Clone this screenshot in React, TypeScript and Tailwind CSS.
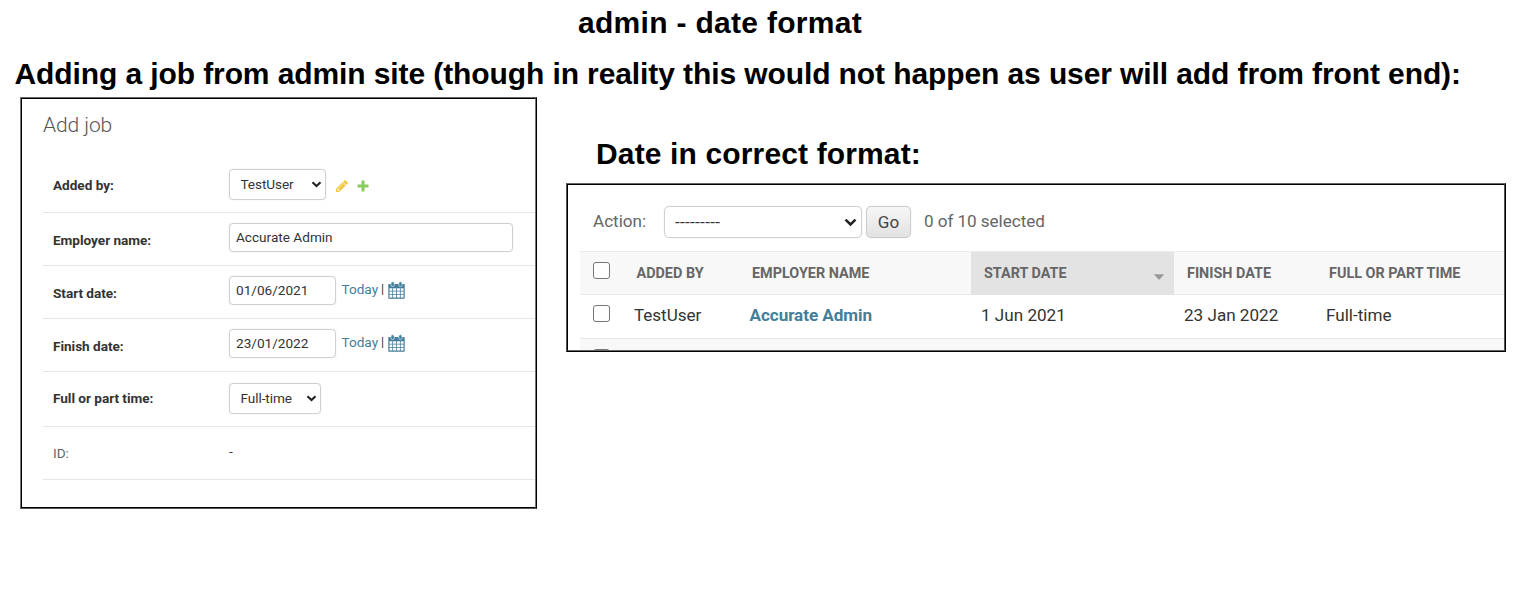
import type { ReactNode } from 'react';

function Chevron({ className }: { className?: string }) {
  return (
    <svg className={className} viewBox="0 0 12 8" fill="none" stroke="#222" strokeWidth="2.4">
      <path d="M1.4 1.4 6 5.8l4.600-4.400" />
    </svg>
  );
}

function Pencil() {
  return (
    <svg className="h-[14px] w-[14px]" viewBox="0 0 1792 1792" fill="#efb80b" fillOpacity="0.75">
      <path d="M491 1536l91-91-235-235-91 91v107h128v128h107zm523-928q0-22-22-22-10 0-17 7l-542 542q-7 7-7 17 0 22 22 22 10 0 17-7l542-542q7-7 7-17zm-54-192l416 416-832 832h-416v-416zm683 96q0 53-37 90l-166 166-416-416 166-165q36-38 90-38 53 0 91 38l235 234q37 39 37 91z" />
    </svg>
  );
}

function Plus() {
  return (
    <svg className="h-[12px] w-[12px]" viewBox="0 0 12 12" fill="#86cb5c">
      <path d="M4.500 .500h3v4H11.500v3H7.500V11.500h-3V7.500H.5v-3h4z" />
    </svg>
  );
}

function CalendarIcon() {
  return (
    <svg className="ml-[3.500px] h-[18px] w-[17px]" viewBox="0 0 17 18">
      <path fill="#447e9b" d="M1 3h15a.7.7 0 0 1 .7.7V17a.7.7 0 0 1-.7.700H1a.7.7 0 0 1-.7-.7V3.700A.7.7 0 0 1 1 3z" />
      <path
        fill="#fff"
        d="M1.500 7.200h2.800v2.500H1.500zM5.100 7.200h3v2.500h-3zM8.900 7.200h3v2.500h-3zM12.700 7.200h2.800v2.500h-2.800zM1.500 10.500h2.800v2.500H1.500zM5.100 10.500h3v2.500h-3zM8.900 10.500h3v2.500h-3zM12.700 10.500h2.800v2.500h-2.800zM1.500 13.800h2.800v2.700H1.500zM5.100 13.800h3v2.700h-3zM8.900 13.800h3v2.700h-3zM12.700 13.800h2.800v2.700h-2.800z"
      />
      <rect x="3" y="0.800" width="3.200" height="4.700" rx="1.400" fill="#447e9b" stroke="#fff" strokeWidth="0.600" />
      <rect x="10.800" y="0.800" width="3.200" height="4.700" rx="1.400" fill="#447e9b" stroke="#fff" strokeWidth="0.600" />
    </svg>
  );
}

function Row({
  label,
  plain,
  className,
  labelClass = 'mt-[17px]',
  children,
}: {
  label: string;
  plain?: boolean;
  className: string;
  labelClass?: string;
  children: ReactNode;
}) {
  return (
    <div className={`flex shrink-0 items-start border-b border-[#e6e6e6] ${className}`}>
      <div
        className={`w-[186px] pl-[10px] leading-[20px] tracking-[-0.030px] ${labelClass} ${plain ? 'text-[#666]' : 'font-bold text-[#333]'}`}
      >
        {label}
      </div>
      {children}
    </div>
  );
}

function Select({ value, className }: { value: string; className: string }) {
  return (
    <div
      className={`flex h-[31px] items-center justify-between rounded-[4px] border-[1.5px] border-[#d0d0d0] pr-[3px] pl-[10.500px] leading-[29px] shadow-[0_0_1px_#ccc] ${className}`}
    >
      <span className="tracking-[-0.080px]">{value}</span>
      <Chevron className="h-[7px] w-[11px]" />
    </div>
  );
}

function Input({ value, className }: { value: string; className: string }) {
  return (
    <div
      className={`mt-[10px] h-[29px] rounded-[4px] border-[1.5px] border-[#d0d0d0] pl-[6px] leading-[27px] shadow-[0_0_1px_#ccc] ${className}`}
    >
      {value}
    </div>
  );
}

function DateField({ value }: { value: string }) {
  return (
    <>
      <Input value={value} className="w-[107px]" />
      <div className="mt-[13px] flex h-[20px] items-start pl-[5.500px] leading-[20px]">
        <span className="text-[#447e9b]">Today</span>
        <span className="ml-[3px] text-[12.500px]">|</span>
        <div className="pt-[2px]">
          <CalendarIcon />
        </div>
      </div>
    </>
  );
}

function Checkbox() {
  return <span className="block h-[17px] w-[17px] shrink-0 rounded-[3px] border-[1.500px] border-[#767676] bg-white" />;
}

const cols = 'grid grid-cols-[44px_114px_233px_203px_142px_188px]';

export default function App() {
  return (
    <div className="flex h-[596px] w-[1518px] flex-col overflow-hidden bg-white font-['Roboto',sans-serif] text-[13.600px] whitespace-nowrap text-[#333]">
      <header className="flex h-[97px] shrink-0 flex-col font-['Liberation_Sans',Arial,sans-serif] text-[30px] font-bold text-black">
        <h1 className="mt-[5px] ml-[578px] leading-[36px] tracking-[0.300px]">admin - date format</h1>
        <h2 className="mt-[15px] ml-[14.500px] leading-[36px] tracking-[-0.100px]">
          Adding a job from admin site (though in reality this would not happen as user will add from front end):
        </h2>
      </header>

      <main className="flex items-start">
        <section className="ml-[20px] h-[412px] w-[517px] border border-t-[#666] border-r-black border-b-[#555] border-l-[#777]">
          <div className="flex h-full flex-col border border-t-black border-r-[#777] border-b-black border-l-black pl-[21px]">
            <h3 className="mt-[13px] h-[46px] shrink-0 text-[21px] leading-[27px] font-light tracking-[-0.100px] text-[#555]">
              Add job
            </h3>
            <Row label="Added by:" className="h-[55px]">
              <Select value="TestUser" className="mt-[11px] w-[97px]" />
              <div className="mt-[21px] ml-[9px] flex items-center gap-[7.500px]">
                <Pencil />
                <Plus />
              </div>
            </Row>
            <Row label="Employer name:" className="h-[53px]">
              <Input value="Accurate Admin" className="w-[284px]" />
            </Row>
            <Row label="Start date:" className="h-[53px]">
              <DateField value="01/06/2021" />
            </Row>
            <Row label="Finish date:" className="h-[53px]">
              <DateField value="23/01/2022" />
            </Row>
            <Row label="Full or part time:" className="h-[55px]" labelClass="mt-[16px]">
              <Select value="Full-time" className="mt-[10.500px] w-[92px]" />
            </Row>
            <Row label="ID:" plain className="h-[53px]" labelClass="mt-[16px]">
              <span className="mt-[14px] leading-[20px]">-</span>
            </Row>
          </div>
        </section>

        <div className="ml-[29px] flex flex-col">
          <h2 className="mt-[39px] ml-[30px] h-[47px] font-['Liberation_Sans',Arial,sans-serif] text-[30px] leading-[36px] font-bold tracking-[0.140px] text-black">
            Date in correct format:
          </h2>
          <section className="h-[169px] w-[940px] border border-t-[#666] border-r-black border-b-black border-l-[#555]">
            <div className="flex h-full flex-col overflow-hidden border border-t-black border-r-[#555] border-b-[#666] border-l-black pl-[12px] text-[17.100px]">
              <div className="flex h-[66px] shrink-0 items-start pt-[21px] text-[#666]">
                <span className="w-[84px] pl-[13px] leading-[31px]">Action:</span>
                <div className="flex h-[32px] w-[198px] items-center justify-between rounded-[5px] border-[1.500px] border-[#d0d0d0] pr-[4px] pl-[10px] leading-[30px] text-[#333] shadow-[0_0_1px_#ccc]">
                  <span className="tracking-[0.300px]">---------</span>
                  <Chevron className="h-[9px] w-[13px]" />
                </div>
                <button className="ml-[4px] h-[32px] w-[45px] rounded-[5px] border-[1.500px] border-[#ccc] bg-linear-to-b from-[#f7f7f7] to-[#e2e2e2] leading-[31px] text-[#444] shadow-[0_0_1px_#ccc]">
                  Go
                </button>
                <span className="ml-[13px] leading-[31px] tracking-[-0.050px]">0 of 10 selected</span>
              </div>
              <div
                className={`${cols} h-[44px] shrink-0 border-y border-[#ebebeb] bg-[#f8f8f8] text-[14.400px] leading-[43px] font-bold text-[#666]`}
              >
                <div className="pt-[10px] pl-[13px]">
                  <Checkbox />
                </div>
                <span className="pl-[12.500px]">ADDED BY</span>
                <span className="pl-[14px]">EMPLOYER NAME</span>
                <div className="flex items-center justify-between bg-[#e3e3e3] pr-[9px] pl-[13px]">
                  <span>START DATE</span>
                  <svg className="mt-[6px] h-[6px] w-[12px]" viewBox="0 0 12 6" fill="#999">
                    <path d="M.8.300h10.400L6.700 5.200a1 1 0 0 1-1.400 0z" />
                  </svg>
                </div>
                <span className="pl-[13px]">FINISH DATE</span>
                <span className="pl-[13px]">FULL OR PART TIME</span>
              </div>
              <div className={`${cols} h-[44px] shrink-0 border-b border-[#e8e8e8] leading-[40px]`}>
                <div className="pt-[10px] pl-[13px]">
                  <Checkbox />
                </div>
                <span className="pl-[10px] tracking-[-0.050px]">TestUser</span>
                <span className="pl-[11.500px] font-bold tracking-[-0.050px] text-[#447e9b]">Accurate Admin</span>
                <span className="pl-[10px]">1 Jun 2021</span>
                <span className="pl-[10px]">23 Jan 2022</span>
                <span className="pl-[10px]">Full-time</span>
              </div>
              <div className="h-[44px] shrink-0 bg-[#f8f8f8] pt-[10px] pl-[13px]">
                <Checkbox />
              </div>
            </div>
          </section>
        </div>
      </main>
    </div>
  );
}
